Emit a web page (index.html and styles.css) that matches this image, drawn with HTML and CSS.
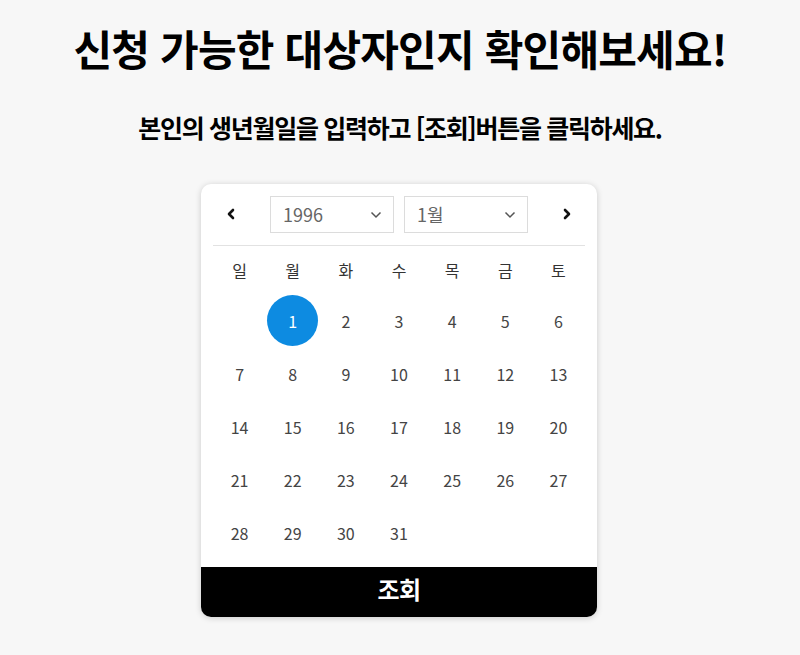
FILE: index.html
```html
<!DOCTYPE html>
<html lang="ko">
<head>
<meta charset="utf-8">
<link rel="stylesheet" href="styles.css">
</head>
<body>
<main class="page">
  <h1 class="title">신청 가능한 대상자인지 확인해보세요!</h1>
  <p class="subtitle">본인의 생년월일을 입력하고 [조회]버튼을 클릭하세요.</p>
  <section class="card">
    <div class="cal-head">
      <button class="nav" aria-label="이전">
        <svg width="10" height="12" viewBox="0 0 10 12"><path d="M7 2 L3 6 L7 10" fill="none" stroke="#111" stroke-width="2.6" stroke-linecap="round" stroke-linejoin="round"/></svg>
      </button>
      <div class="selects">
        <div class="select"><span>1996</span>
          <svg width="12" height="8" viewBox="0 0 12 8"><path d="M1.5 1.5 L6 6 L10.5 1.5" fill="none" stroke="#555" stroke-width="1.5"/></svg>
        </div>
        <div class="select"><span>1월</span>
          <svg width="12" height="8" viewBox="0 0 12 8"><path d="M1.5 1.5 L6 6 L10.5 1.5" fill="none" stroke="#555" stroke-width="1.5"/></svg>
        </div>
      </div>
      <button class="nav" aria-label="다음">
        <svg width="10" height="12" viewBox="0 0 10 12"><path d="M3 2 L7 6 L3 10" fill="none" stroke="#111" stroke-width="2.6" stroke-linecap="round" stroke-linejoin="round"/></svg>
      </button>
    </div>
    <div class="grid">
      <div class="wd">일</div><div class="wd">월</div><div class="wd">화</div><div class="wd">수</div><div class="wd">목</div><div class="wd">금</div><div class="wd">토</div>
      <div class="day"></div>
      <div class="day"><span class="sel">1</span></div>
      <div class="day">2</div><div class="day">3</div><div class="day">4</div><div class="day">5</div><div class="day">6</div>
      <div class="day">7</div><div class="day">8</div><div class="day">9</div><div class="day">10</div><div class="day">11</div><div class="day">12</div><div class="day">13</div>
      <div class="day">14</div><div class="day">15</div><div class="day">16</div><div class="day">17</div><div class="day">18</div><div class="day">19</div><div class="day">20</div>
      <div class="day">21</div><div class="day">22</div><div class="day">23</div><div class="day">24</div><div class="day">25</div><div class="day">26</div><div class="day">27</div>
      <div class="day">28</div><div class="day">29</div><div class="day">30</div><div class="day">31</div>
    </div>
    <button class="submit">조회</button>
  </section>
</main>
</body>
</html>
```

FILE: styles.css
```css
* { box-sizing: border-box; }
html, body { margin: 0; padding: 0; }
body {
  background: #f7f7f7;
  font-family: "Noto Sans CJK KR", "Noto Sans", sans-serif;
  color: #111;
  width: 800px;
  height: 655px;
  overflow: hidden;
}
.page {
  display: flex;
  flex-direction: column;
  align-items: center;
  padding-top: 20px;
}
.title {
  margin: 0;
  font-size: 42px;
  font-weight: 700;
  letter-spacing: -0.8px;
  line-height: 56px;
  color: #000;
}
.subtitle {
  margin: 34px 0 0;
  font-size: 25px;
  font-weight: 700;
  letter-spacing: -1.3px;
  line-height: 34px;
  color: #000;
}
.card {
  margin-top: 40px;
  width: 396px;
  margin-left: -2px;
  background: #fff;
  border-radius: 10px;
  box-shadow: 0 1px 6px rgba(0,0,0,0.18);
  overflow: hidden;
  display: flex;
  flex-direction: column;
}
.cal-head {
  margin: 0 12px;
  height: 62px;
  border-bottom: 1px solid #e2e2e2;
  display: flex;
  align-items: center;
  justify-content: space-between;
  padding: 0 8px;
}
.nav {
  border: 0;
  background: none;
  padding: 0;
  width: 20px;
  height: 20px;
  display: flex;
  align-items: center;
  justify-content: center;
  margin-top: -1px;
}
.selects {
  display: flex;
  gap: 10px;
  margin-top: -1px;
}
.select {
  width: 124px;
  height: 37px;
  border: 1px solid #dcdcdc;
  display: flex;
  align-items: center;
  justify-content: space-between;
  padding: 0 11px 0 12px;
  font-size: 18px;
  color: #666;
}
.select svg { margin-top: 1px; }
.grid {
  margin: 0 12px;
  display: grid;
  grid-template-columns: repeat(7, 1fr);
  grid-template-rows: 48px repeat(5, 53px);
  padding-bottom: 8px;
}
.wd {
  display: flex;
  align-items: center;
  justify-content: center;
  font-size: 16px;
  color: #333;
}
.day {
  display: flex;
  align-items: center;
  justify-content: center;
  font-size: 16px;
  color: #444;
}
.sel {
  width: 51px;
  height: 51px;
  border-radius: 50%;
  background: #0d8be1;
  color: #fff;
  display: flex;
  align-items: center;
  justify-content: center;
}
.submit {
  border: 0;
  height: 50px;
  background: #000;
  color: #fff;
  font-family: inherit;
  font-size: 24px;
  font-weight: 700;
  letter-spacing: -0.5px;
  padding: 0 0 8px;
}
```
